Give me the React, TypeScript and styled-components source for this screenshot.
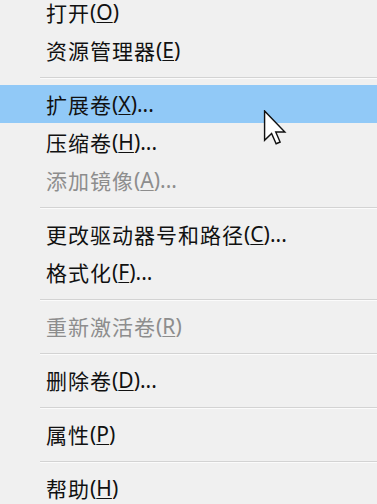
import { createGlobalStyle, styled } from "styled-components";

const GlobalStyle = createGlobalStyle`
  html, body {
    margin: 0;
    padding: 0;
    background: #f0f0f0;
    overflow: hidden;
  }
  body {
    font-family: "Noto Sans", "Noto Sans CJK SC", sans-serif;
  }
`;

type Item =
  | { kind: "item"; label: string; key: string; dots?: boolean; disabled?: boolean; active?: boolean }
  | { kind: "sep" };

const menuData: Item[] = [
  { kind: "item", label: "打开", key: "O" },
  { kind: "item", label: "资源管理器", key: "E" },
  { kind: "sep" },
  { kind: "item", label: "扩展卷", key: "X", dots: true, active: true },
  { kind: "item", label: "压缩卷", key: "H", dots: true },
  { kind: "item", label: "添加镜像", key: "A", dots: true, disabled: true },
  { kind: "sep" },
  { kind: "item", label: "更改驱动器号和路径", key: "C", dots: true },
  { kind: "item", label: "格式化", key: "F", dots: true },
  { kind: "sep" },
  { kind: "item", label: "重新激活卷", key: "R", disabled: true },
  { kind: "sep" },
  { kind: "item", label: "删除卷", key: "D", dots: true },
  { kind: "sep" },
  { kind: "item", label: "属性", key: "P" },
  { kind: "sep" },
  { kind: "item", label: "帮助", key: "H" },
];

function App() {
  return (
    <>
      <GlobalStyle />
      <Screen>
        <Menu>
          {menuData.map((ele, i) =>
            ele.kind === "sep" ? (
              <Separator key={i} />
            ) : (
              <MenuItem key={i} $active={ele.active} $disabled={ele.disabled}>
                <Label>{ele.label}</Label>(<u>{ele.key}</u>){ele.dots ? "..." : ""}
              </MenuItem>
            )
          )}
        </Menu>
        <Cursor width="24" height="36" viewBox="0 0 12 19">
          <path
            d="M0.5 0.5 L0.5 16 L4.2 12.4 L6.6 17.8 L8.7 16.9 L6.4 11.6 L11.2 11.6 Z"
            fill="#fff"
            stroke="#111"
            strokeWidth="0.75"
            strokeLinejoin="miter"
          />
        </Cursor>
      </Screen>
    </>
  );
}

export default App;

const Screen = styled.div`
  position: relative;
  width: 377px;
  height: 504px;
  overflow: hidden;
  background: #f0f0f0;
`;

const Menu = styled.ul`
  list-style: none;
  margin: -7px 0 0;
  padding: 0;
`;

const MenuItem = styled.li<{ $active?: boolean; $disabled?: boolean }>`
  display: flex;
  align-items: center;
  height: 38px;
  padding-left: 46px;
  font-size: 21px;
  color: ${(p) => (p.$disabled ? "#8d8d8d" : "#111")};
  background: ${(p) => (p.$active ? "#91c9f7" : "transparent")};

  u {
    text-decoration-thickness: 1px;
    text-underline-offset: 2px;
  }
`;

const Label = styled.span`
  letter-spacing: 1px;
`;

const Separator = styled.li`
  height: 16px;
  display: flex;
  align-items: center;
  margin-left: 40px;

  &::after {
    content: "";
    flex: 1;
    height: 1px;
    background: #d3d3d3;
    box-shadow: 0 1px 0 #fbfbfb;
  }
`;

const Cursor = styled.svg`
  position: absolute;
  left: 263px;
  top: 110px;
`;
